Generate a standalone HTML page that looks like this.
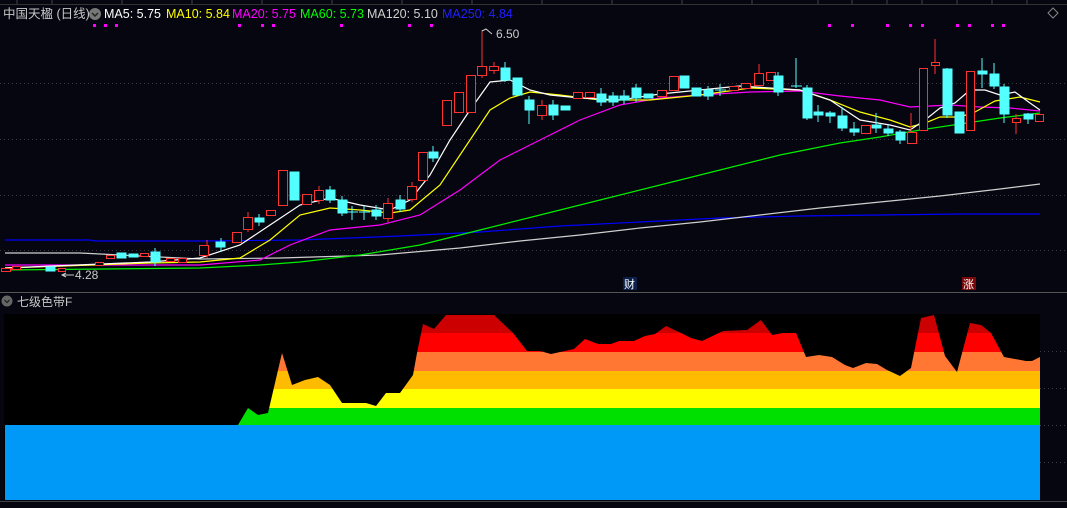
<!DOCTYPE html>
<html><head><meta charset="utf-8"><style>
html,body{margin:0;padding:0;background:#05060f;width:1067px;height:508px;overflow:hidden}
svg{display:block}
text{font-family:"Liberation Sans","Noto Sans CJK SC",sans-serif}
</style></head><body>
<svg width="1067" height="508" viewBox="0 0 1067 508" xmlns="http://www.w3.org/2000/svg">
<rect width="1067" height="508" fill="#05060f"/>
<line x1="0" y1="4.5" x2="1067" y2="4.5" stroke="#333" />
<g stroke="#444"><line x1="17" y1="0" x2="17" y2="4"/><line x1="52" y1="0" x2="52" y2="4"/><line x1="122" y1="0" x2="122" y2="4"/><line x1="192" y1="0" x2="192" y2="4"/><line x1="262" y1="0" x2="262" y2="4"/><line x1="332" y1="0" x2="332" y2="4"/><line x1="402" y1="0" x2="402" y2="4"/><line x1="472" y1="0" x2="472" y2="4"/><line x1="542" y1="0" x2="542" y2="4"/><line x1="612" y1="0" x2="612" y2="4"/><line x1="682" y1="0" x2="682" y2="4"/><line x1="752" y1="0" x2="752" y2="4"/><line x1="818" y1="0" x2="818" y2="4"/><line x1="852" y1="0" x2="852" y2="4"/><line x1="887" y1="0" x2="887" y2="4"/><line x1="922" y1="0" x2="922" y2="4"/><line x1="957" y1="0" x2="957" y2="4"/><line x1="992" y1="0" x2="992" y2="4"/><line x1="1027" y1="0" x2="1027" y2="4"/></g>
<g stroke="#3a3a44" stroke-dasharray="1,3"><line x1="0" y1="83.5" x2="1067" y2="83.5"/><line x1="0" y1="139.5" x2="1067" y2="139.5"/><line x1="0" y1="195.5" x2="1067" y2="195.5"/><line x1="0" y1="250.5" x2="1067" y2="250.5"/><line x1="1040" y1="351.5" x2="1067" y2="351.5"/><line x1="1040" y1="388.5" x2="1067" y2="388.5"/><line x1="1040" y1="425.5" x2="1067" y2="425.5"/><line x1="1040" y1="462.5" x2="1067" y2="462.5"/></g>
<line x1="0" y1="292.5" x2="1067" y2="292.5" stroke="#555"/>
<text x="3" y="18" font-size="12.5" fill="#c8c8c8">中国天楹 (日线)</text>
<circle cx="95" cy="14" r="6" fill="#777"/><path d="M92 13l3 3 3-3" stroke="#222" stroke-width="1.5" fill="none"/>
<text x="104" y="18" font-size="12.5" fill="#fff">MA5: 5.75</text>
<text x="166" y="18" font-size="12.5" fill="#ffff00">MA10: 5.84</text>
<text x="232" y="18" font-size="12.5" fill="#ff00ff">MA20: 5.75</text>
<text x="300" y="18" font-size="12.5" fill="#00ff00">MA60: 5.73</text>
<text x="367" y="18" font-size="12.5" fill="#d0d0d0">MA120: 5.10</text>
<text x="442" y="18" font-size="12.5" fill="#2020ff">MA250: 4.84</text>
<path d="M1053 8l5 5-5 5-5-5z" stroke="#888" fill="none"/>
<g fill="#ff00ff"><rect x="93" y="24" width="3" height="3"/><rect x="104" y="24" width="3" height="3"/><rect x="115" y="24" width="3" height="3"/><rect x="238" y="24" width="3" height="3"/><rect x="261" y="24" width="3" height="3"/><rect x="272" y="24" width="3" height="3"/><rect x="340" y="24" width="3" height="3"/><rect x="408" y="24" width="3" height="3"/><rect x="430" y="24" width="3" height="3"/><rect x="828" y="24" width="3" height="3"/><rect x="851" y="24" width="3" height="3"/><rect x="886" y="24" width="3" height="3"/><rect x="909" y="24" width="3" height="3"/><rect x="921" y="24" width="3" height="3"/><rect x="956" y="24" width="3" height="3"/><rect x="968" y="24" width="3" height="3"/><rect x="991" y="24" width="3" height="3"/><rect x="1002" y="24" width="3" height="3"/></g>
<g fill="none" stroke-width="1.2">
<polyline stroke="#0000ff" points="5,240 90,240 95,241 200,241 300,240 400,236 480,232 560,226 640,222 720,218 800,216 880,215 960,214 1040,214"/>
<polyline stroke="#cfcfcf" points="5,253 80,253 120,255 160,257 200,259 280,258 380,255 460,248 520,241 580,235 640,228 700,222 760,215 820,208 880,202 940,196 1000,189 1040,184"/>
<polyline stroke="#00ee00" points="5,270 200,268 260,265 300,262 360,255 420,245 480,230 540,215 600,200 660,185 720,170 780,155 840,143 880,137 920,130 960,124 1000,118 1040,113"/>
<polyline stroke="#ff00ff" points="5,265 200,265 260,260 290,245 330,230 380,225 420,215 460,190 500,160 540,140 580,120 620,105 660,98 700,95 750,92 800,91 840,96 880,100 910,107 930,106 950,105 980,107 1010,108 1040,111"/>
<polyline stroke="#ffff00" points="5,268 150,263 200,262 240,258 270,240 300,215 330,208 360,210 390,213 410,210 440,185 470,140 490,110 510,98 530,92 560,95 600,100 650,100 700,95 750,88 800,90 830,100 860,112 890,120 910,127 925,123 940,117 960,117 975,112 995,101 1020,97 1040,102"/>
<polyline stroke="#ffffff" points="5,268 150,262 200,258 240,245 270,225 300,205 330,198 360,205 390,210 410,200 430,175 450,140 470,110 490,82 510,80 530,90 550,95 580,98 620,100 660,94 700,90 740,86 770,88 800,90 830,100 860,120 890,125 910,130 925,120 940,108 955,103 970,90 985,90 1000,95 1015,92 1030,103 1040,110"/>
</g>
<g stroke-width="1">
<g stroke="#ff3232" fill="#05060f">
<rect x="1.5" y="268.5" width="9" height="3"/><rect x="12.5" y="266.5" width="8" height="3"/><rect x="58.5" y="268.5" width="7" height="3"/><rect x="95.5" y="262.5" width="8" height="3"/><rect x="106.5" y="255.5" width="8" height="3"/><rect x="140.5" y="253.5" width="8" height="3"/><rect x="166.5" y="258.5" width="8" height="3"/><rect x="178.5" y="258.5" width="8" height="4"/>
<line x1="207" y1="240" x2="207" y2="258"/><rect x="199.5" y="245.5" width="9" height="10"/>
<rect x="232.5" y="232.5" width="9" height="10"/>
<line x1="248" y1="212" x2="248" y2="232"/><rect x="243.5" y="217.5" width="9" height="12"/>
<rect x="266.5" y="210.5" width="9" height="5"/>
<rect x="278.5" y="170.5" width="9" height="35"/>
<rect x="302.5" y="194.5" width="9" height="10"/>
<line x1="319" y1="186" x2="319" y2="204"/><rect x="314.5" y="190.5" width="9" height="10"/>
<line x1="388" y1="198" x2="388" y2="222"/><rect x="383.5" y="203.5" width="9" height="15"/>
<line x1="412" y1="182" x2="412" y2="202"/><rect x="407.5" y="186.5" width="9" height="13"/>
<rect x="418.5" y="152.5" width="9" height="28"/>
<rect x="442.5" y="100.5" width="9" height="25"/>
<rect x="454.5" y="92.5" width="9" height="20"/>
<rect x="466.5" y="75.5" width="9" height="37"/>
<line x1="482" y1="30" x2="482" y2="78"/><rect x="477.5" y="66.5" width="9" height="9"/>
<line x1="494" y1="62" x2="494" y2="74"/><rect x="489.5" y="66.5" width="9" height="4"/>
<line x1="542" y1="100" x2="542" y2="120"/><rect x="537.5" y="105.5" width="9" height="10"/>
<rect x="573.5" y="92.5" width="9" height="6"/><rect x="585.5" y="92.5" width="9" height="5"/>
<rect x="657.5" y="90.5" width="9" height="6"/><rect x="669.5" y="76.5" width="9" height="14"/>
<rect x="729.5" y="86.5" width="9" height="4"/><rect x="741.5" y="83.5" width="9" height="5"/>
<line x1="759" y1="64" x2="759" y2="86"/><rect x="754.5" y="73.5" width="9" height="12"/>
<rect x="766.5" y="72.5" width="9" height="8"/>
<rect x="861.5" y="125.5" width="9" height="8"/>
<line x1="911" y1="113" x2="911" y2="144"/><rect x="907.5" y="132.5" width="9" height="11"/>
<rect x="919.5" y="68.5" width="8" height="62"/>
<line x1="935" y1="39" x2="935" y2="74"/><rect x="931.5" y="62.5" width="8" height="3"/>
<rect x="966.5" y="71.5" width="8" height="59"/>
<line x1="1016" y1="114" x2="1016" y2="134"/><rect x="1012.5" y="118.5" width="8" height="4"/>
<rect x="1035.5" y="114.5" width="8" height="7"/>
</g>
<g stroke="#54ffff" fill="#54ffff">
<rect x="46" y="267" width="9" height="4"/><rect x="117" y="253" width="9" height="5"/><rect x="129" y="254" width="9" height="3"/>
<line x1="155" y1="248" x2="155" y2="266"/><rect x="151" y="252" width="9" height="10"/>
<line x1="221" y1="238" x2="221" y2="252"/><rect x="216" y="242" width="9" height="5"/>
<line x1="259" y1="214" x2="259" y2="226"/><rect x="255" y="218" width="9" height="4"/>
<rect x="290" y="172" width="9" height="28"/>
<line x1="330" y1="186" x2="330" y2="203"/><rect x="326" y="190" width="9" height="10"/>
<line x1="342" y1="196" x2="342" y2="216"/><rect x="338" y="200" width="9" height="13"/>
<line x1="352" y1="206" x2="352" y2="220"/><line x1="347" y1="212" x2="358" y2="212"/>
<line x1="364" y1="206" x2="364" y2="220"/><line x1="359" y1="212" x2="370" y2="212"/>
<line x1="376" y1="205" x2="376" y2="220"/><rect x="372" y="210" width="9" height="6"/>
<line x1="400" y1="195" x2="400" y2="212"/><rect x="396" y="200" width="9" height="9"/>
<line x1="433" y1="146" x2="433" y2="162"/><rect x="429" y="152" width="9" height="6"/>
<line x1="505" y1="62" x2="505" y2="82"/><rect x="501" y="68" width="9" height="12"/>
<rect x="513" y="78" width="9" height="17"/>
<line x1="529" y1="96" x2="529" y2="124"/><rect x="525" y="100" width="9" height="10"/>
<line x1="553" y1="100" x2="553" y2="120"/><rect x="549" y="105" width="9" height="10"/>
<rect x="561" y="106" width="9" height="4"/>
<line x1="601" y1="88" x2="601" y2="106"/><rect x="597" y="94" width="9" height="8"/>
<line x1="613" y1="92" x2="613" y2="106"/><rect x="609" y="96" width="9" height="6"/>
<line x1="624" y1="90" x2="624" y2="104"/><rect x="620" y="96" width="9" height="4"/>
<line x1="636" y1="84" x2="636" y2="102"/><rect x="632" y="88" width="9" height="10"/>
<rect x="644" y="94" width="9" height="4"/>
<rect x="680" y="76" width="9" height="12"/>
<rect x="692" y="88" width="9" height="8"/>
<line x1="708" y1="86" x2="708" y2="100"/><rect x="704" y="90" width="9" height="6"/>
<line x1="720" y1="84" x2="720" y2="96"/><line x1="715" y1="90" x2="726" y2="90"/>
<line x1="778" y1="72" x2="778" y2="96"/><rect x="774" y="76" width="9" height="16"/>
<line x1="796" y1="58" x2="796" y2="88"/><line x1="791" y1="86" x2="802" y2="86"/>
<line x1="807" y1="85" x2="807" y2="120"/><rect x="803" y="88" width="9" height="30"/>
<line x1="818" y1="105" x2="818" y2="122"/><rect x="814" y="112" width="9" height="3"/>
<line x1="830" y1="111" x2="830" y2="123"/><rect x="826" y="113" width="9" height="3"/>
<line x1="842" y1="107" x2="842" y2="131"/><rect x="838" y="116" width="9" height="12"/>
<line x1="854" y1="122" x2="854" y2="136"/><rect x="850" y="129" width="9" height="3"/>
<line x1="876" y1="113" x2="876" y2="133"/><rect x="872" y="125" width="9" height="3"/>
<line x1="888" y1="125" x2="888" y2="136"/><rect x="884" y="129" width="9" height="4"/>
<line x1="900" y1="130" x2="900" y2="144"/><rect x="896" y="132" width="9" height="8"/>
<line x1="947" y1="68" x2="947" y2="118"/><rect x="943" y="69" width="9" height="46"/>
<rect x="955" y="112" width="9" height="21"/>
<line x1="982" y1="58" x2="982" y2="88"/><rect x="978" y="71" width="9" height="3"/>
<line x1="994" y1="63" x2="994" y2="89"/><rect x="990" y="74" width="9" height="12"/>
<line x1="1004" y1="84" x2="1004" y2="123"/><rect x="1000" y="87" width="9" height="27"/>
<line x1="1028" y1="113" x2="1028" y2="124"/><rect x="1024" y="114" width="9" height="5"/>
</g>
</g>
<path d="M482 31l4-2 6 5" stroke="#ccc" fill="none"/>
<text x="496" y="38" font-size="12" fill="#ccc">6.50</text>
<path d="M66 273l-4 2 4 2M62 275h12" stroke="#ccc" fill="none"/>
<text x="75" y="279" font-size="12" fill="#ccc">4.28</text>
<rect x="623" y="277" width="14" height="13" fill="#0b1f4a"/><text x="624" y="288" font-size="11" fill="#fff">财</text>
<rect x="962" y="277" width="14" height="13" fill="#7a0a0a"/><text x="963" y="288" font-size="11" fill="#fff">涨</text>
<circle cx="7" cy="301" r="5.5" fill="#666"/><path d="M4.5 300l2.5 2.5 2.5-2.5" stroke="#222" stroke-width="1.3" fill="none"/>
<text x="17" y="306" font-size="12" fill="#c8c8c8">七级色带F</text>
<rect x="4" y="314" width="1036" height="186" fill="#000"/>
<defs><clipPath id="env"><polygon points="5,425 238,425 248,408 258,415 268,413 282,353 292,385 305,380 318,377 330,385 342,403 366,403 376,406 386,393 400,393 413,375 417,353 423,324 434,329 446,315 494,315 513,333 527,351 540,351 551,354 574,349 585,339 598,344 611,344 619,341 634,341 645,336 655,334 666,326 681,333 691,338 702,341 723,331 747,330 761,320 772,335 783,333 796,333 806,357 819,355 832,357 845,365 853,368 866,363 877,364 887,370 900,376 911,368 921,318 934,315 945,356 957,372 970,323 981,325 991,333 1004,357 1026,361 1032,361 1040,357 1040,500 5,500"/></clipPath></defs>
<g clip-path="url(#env)">
<rect x="5" y="314" width="1035" height="20" fill="#cc0000"/>
<rect x="5" y="333" width="1035" height="19" fill="#ff0000"/>
<rect x="5" y="352" width="1035" height="19" fill="#ff7733"/>
<rect x="5" y="371" width="1035" height="18" fill="#ffbb00"/>
<rect x="5" y="389" width="1035" height="19" fill="#ffff00"/>
<rect x="5" y="408" width="1035" height="17" fill="#00e000"/>
<rect x="5" y="425" width="1035" height="75" fill="#0099f7"/>
</g>
<line x1="0" y1="501.5" x2="1067" y2="501.5" stroke="#444"/>
<text x="14" y="515" font-size="10" fill="#bbb">141.97 13.28 0 787 6.89 751 6.89 141.97 6.89</text>
</svg>
</body></html>
